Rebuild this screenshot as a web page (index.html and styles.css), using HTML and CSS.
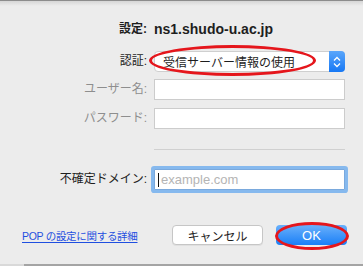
FILE: index.html
```html
<!DOCTYPE html>
<html lang="ja">
<head>
  <meta charset="UTF-8">
  <title>POP 設定</title>
  <link rel="stylesheet" href="styles.css">
</head>
<body>
  <div class="sheet">
    <div class="form">
      <div class="label title-label">設定:</div>
      <div class="title-value">ns1.shudo-u.ac.jp</div>

      <div class="label row-select">認証:</div>
      <div class="select row-select">
        <span class="select-text">受信サーバー情報の使用</span>
        <span class="stepper">
          <svg width="8" height="12" viewBox="0 0 8 12">
            <path d="M1 4.5 L4 1.5 L7 4.5 M1 7.5 L4 10.5 L7 7.5" fill="none" stroke="#fff" stroke-width="1.3"/>
          </svg>
        </span>
        <span class="mark mark-select"></span>
      </div>

      <div class="label disabled row-user">ユーザー名:</div>
      <div class="input row-user"></div>

      <div class="label disabled row-pass">パスワード:</div>
      <div class="input row-pass"></div>

      <div class="separator"></div>

      <div class="label row-domain">不確定ドメイン:</div>
      <div class="input focused row-domain">
        <span class="caret"></span>
        <span class="placeholder">example.com</span>
      </div>
    </div>

    <div class="footer">
      <a href="#" class="help-link">POP の設定に関する詳細</a>
      <div class="buttons">
        <button class="btn btn-cancel">キャンセル</button>
        <button class="btn btn-ok">OK<span class="mark mark-ok"></span></button>
      </div>
    </div>
  </div>
  <div class="bottom-edge"></div>
</body>
</html>
```

FILE: styles.css
```css
* {
  margin: 0;
  padding: 0;
  box-sizing: border-box;
}

body {
  font-family: "Liberation Sans", "Noto Sans CJK JP", sans-serif;
  background-color: #ececec;
  color: #1e1e1e;
  width: 363px;
  height: 266px;
  overflow: hidden;
}

.sheet {
  height: 264px;
  border-top: 1px solid #8c8c8c;
  background: linear-gradient(#d6d6d6, #ececec 5px);
}

.bottom-edge {
  height: 2px;
  background: linear-gradient(90deg, #d9d9d9 24px, #a4a4a4 24px);
}

/* form grid */
.form {
  display: grid;
  grid-template-columns: 147px 191px;
  column-gap: 7px;
  align-items: center;
  padding-top: 18px;
}

.label {
  text-align: right;
  font-size: 12px;
  line-height: 21px;
  white-space: nowrap;
}

.label.disabled {
  color: #8e8e8e;
}

.title-label {
  font-weight: bold;
  font-size: 12px;
  line-height: 21px;
}

.title-value {
  font-weight: bold;
  font-size: 14px;
  line-height: 21px;
}

.row-select {
  margin-top: 11px;
}

.row-user {
  margin-top: 7px;
}

.row-pass {
  margin-top: 8px;
}

.row-domain {
  margin-top: 19px;
}

.select {
  position: relative;
  height: 21px;
  display: flex;
  align-items: center;
  background-color: #fff;
  border: 1px solid #cfcfcf;
  border-radius: 4px;
  font-size: 12px;
}

.select-text {
  flex: 1;
  padding-left: 8px;
}

.stepper {
  width: 16px;
  height: 21px;
  margin: -1px -1px -1px 0;
  border-radius: 0 4px 4px 0;
  background: linear-gradient(#5aa6fb, #1778f4);
  display: flex;
  align-items: center;
  justify-content: center;
}

.input {
  height: 21px;
  background-color: #fff;
  border: 1px solid #cccccc;
  display: flex;
  align-items: center;
}

.input.focused {
  box-shadow: 0 0 0 3px #86b9ee;
  border-color: #7aa9dd;
  border-radius: 1px;
}

.caret {
  width: 1px;
  height: 14px;
  margin-left: 3px;
  background-color: #111;
}

.placeholder {
  font-size: 13px;
  color: #b4b4b4;
  margin-left: 2px;
}

.separator {
  grid-column: 2;
  height: 1px;
  margin-top: 20px;
  background-color: #d0d0d0;
}

/* footer */
.footer {
  display: flex;
  align-items: center;
  justify-content: space-between;
  margin-top: 35px;
  padding: 0 16px 0 22px;
}

.help-link {
  color: #1f4fe0;
  font-size: 10.5px;
  letter-spacing: -0.3px;
  text-decoration: underline;
  text-underline-offset: 2px;
}

.buttons {
  display: flex;
  gap: 13px;
}

.btn {
  height: 20px;
  font-family: inherit;
  font-size: 12px;
  border-radius: 4px;
  cursor: pointer;
}

.btn-cancel {
  width: 91px;
  background-color: #fff;
  color: #1e1e1e;
  border: 1px solid #c6c6c6;
  box-shadow: 0 1px 0 rgba(0, 0, 0, 0.05);
}

.btn-ok {
  position: relative;
  width: 71px;
  border: none;
  color: #fff;
  font-size: 13px;
  background: linear-gradient(#69b0fb, #1a7ff7);
}

/* red annotation rings */
.mark {
  position: absolute;
  border: 3px solid #e5161c;
  border-radius: 50%;
  pointer-events: none;
}

.mark-select {
  left: -6px;
  top: -7px;
  width: 167px;
  height: 31px;
}

.mark-ok {
  left: -1px;
  top: -3px;
  width: 74px;
  height: 28px;
}
```
